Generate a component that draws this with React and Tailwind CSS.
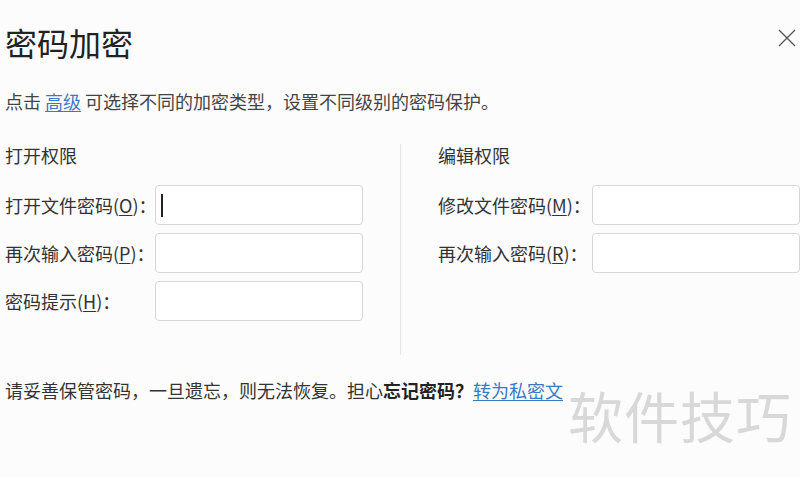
import React from "react";

const font = { fontFamily: '"Noto Sans CJK SC", "Noto Sans", sans-serif' };

function Field({ label, keyChar, labelW, caret }) {
  return (
    <div className="flex items-center h-[40px]">
      <div className={`${labelW} text-[18px] leading-none text-[#333333] whitespace-nowrap`}>
        {label}(<span className="underline underline-offset-2">{keyChar}</span>)：
      </div>
      <div className="relative w-[208px] h-[40px] rounded-[4px] border border-[#d4d6da] bg-white">
        {caret && <div className="absolute left-[5px] top-[8px] w-[2px] h-[23px] bg-[#222]" />}
      </div>
    </div>
  );
}

export default function App() {
  return (
    <div className="relative w-[800px] h-[477px] overflow-hidden bg-[#fcfcfd]" style={font}>
      <div className="flex justify-between items-start pt-[26px] pl-[5px] pr-[5px]">
        <div className="text-[32px] leading-none text-[#222222]">密码加密</div>
        <svg width="18" height="18" viewBox="0 0 18 18" className="mt-[3px] mr-[-1px]">
          <path d="M1 1 L17 17 M17 1 L1 17" stroke="#555" strokeWidth="1.3" fill="none" />
        </svg>
      </div>
      <div className="mt-[34px] pl-[5px] text-[18px] leading-none text-[#444444] whitespace-nowrap">
        点击 <span className="text-[#3b78c2] underline underline-offset-2">高级</span> 可选择不同的加密类型，设置不同级别的密码保护。
      </div>
      <div className="flex mt-[34px]">
        <div className="w-[401px] border-r border-[#e4e5e8] pl-[5px] pt-[2px] pb-[34px]">
          <div className="text-[18px] leading-none text-[#333333]">打开权限</div>
          <div className="mt-[21px] flex flex-col gap-[8px]">
            <Field label="打开文件密码" keyChar="O" labelW="w-[150px]" caret />
            <Field label="再次输入密码" keyChar="P" labelW="w-[150px]" />
            <Field label="密码提示" keyChar="H" labelW="w-[150px]" />
          </div>
        </div>
        <div className="pl-[37px] pt-[2px]">
          <div className="text-[18px] leading-none text-[#333333]">编辑权限</div>
          <div className="mt-[21px] flex flex-col gap-[8px]">
            <Field label="修改文件密码" keyChar="M" labelW="w-[154px]" />
            <Field label="再次输入密码" keyChar="R" labelW="w-[154px]" />
          </div>
        </div>
      </div>
      <div className="mt-[26px] pl-[5px] text-[18px] leading-none text-[#333333] whitespace-nowrap">
        请妥善保管密码，一旦遗忘，则无法恢复。担心<span className="font-bold text-[#222]">忘记密码？</span>
        <span className="text-[#3b78c2] underline underline-offset-2">转为私密文</span>
      </div>
      <div className="absolute left-[568px] top-[387px] text-[55px] leading-none text-[#d8d8d8] tracking-[1px] whitespace-nowrap">
        软件技巧
      </div>
    </div>
  );
}
